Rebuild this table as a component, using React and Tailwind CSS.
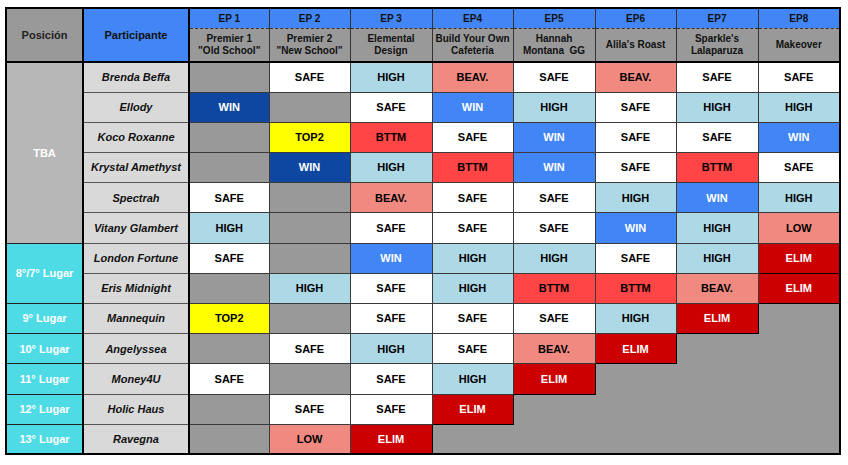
const EPISODES = [
  ['EP 1', ['Premier 1', '"Old School"']],
  ['EP 2', ['Premier 2', '"New School"']],
  ['EP 3', ['Elemental', 'Design']],
  ['EP4', ['Build Your Own', 'Cafeteria']],
  ['EP5', ['Hannah', 'Montana\u00a0 GG']],
  ['EP6', ["Alila's Roast"]],
  ['EP7', ["Sparkle's", 'Lalaparuza']],
  ['EP8', ['Makeover']],
]

// '-' = no participation (gray), 'W' = dark-blue win
const ROWS = [
  { name: 'Brenda Beffa', res: ['-', 'SAFE', 'HIGH', 'BEAV.', 'SAFE', 'BEAV.', 'SAFE', 'SAFE'] },
  { name: 'Ellody', res: ['W', '-', 'SAFE', 'WIN', 'HIGH', 'SAFE', 'HIGH', 'HIGH'] },
  { name: 'Koco Roxanne', res: ['-', 'TOP2', 'BTTM', 'SAFE', 'WIN', 'SAFE', 'SAFE', 'WIN'] },
  { name: 'Krystal Amethyst', res: ['-', 'W', 'HIGH', 'BTTM', 'WIN', 'SAFE', 'BTTM', 'SAFE'] },
  { name: 'Spectrah', res: ['SAFE', '-', 'BEAV.', 'SAFE', 'SAFE', 'HIGH', 'WIN', 'HIGH'] },
  { name: 'Vitany Glambert', res: ['HIGH', '-', 'SAFE', 'SAFE', 'SAFE', 'WIN', 'HIGH', 'LOW'] },
  { name: 'London Fortune', res: ['SAFE', '-', 'WIN', 'HIGH', 'HIGH', 'SAFE', 'HIGH', 'ELIM'] },
  { name: 'Eris Midnight', res: ['-', 'HIGH', 'SAFE', 'HIGH', 'BTTM', 'BTTM', 'BEAV.', 'ELIM'] },
  { name: 'Mannequin', res: ['TOP2', '-', 'SAFE', 'SAFE', 'SAFE', 'HIGH', 'ELIM'] },
  { name: 'Angelyssea', res: ['-', 'SAFE', 'HIGH', 'SAFE', 'BEAV.', 'ELIM'] },
  { name: 'Money4U', res: ['SAFE', '-', 'SAFE', 'HIGH', 'ELIM'] },
  { name: 'Holic Haus', res: ['-', 'SAFE', 'SAFE', 'ELIM'] },
  { name: 'Ravegna', res: ['-', 'LOW', 'ELIM'] },
]

const PLACES = [
  { label: 'TBA', span: 6, cls: 'bg-[#b7b7b7]' },
  { label: '8°/7° Lugar', span: 2, cls: 'bg-[#4fdbe5]' },
  { label: '9° Lugar', span: 1, cls: 'bg-[#4fdbe5]' },
  { label: '10° Lugar', span: 1, cls: 'bg-[#4fdbe5]' },
  { label: '11° Lugar', span: 1, cls: 'bg-[#4fdbe5]' },
  { label: '12° Lugar', span: 1, cls: 'bg-[#4fdbe5]' },
  { label: '13° Lugar', span: 1, cls: 'bg-[#4fdbe5]' },
]

const CELL = {
  '-': 'bg-[#999999]',
  SAFE: 'bg-white text-black',
  HIGH: 'bg-[#add8e6] text-black',
  'BEAV.': 'bg-[#f08a80] text-black',
  LOW: 'bg-[#f08a80] text-black',
  BTTM: 'bg-[#ff4545] text-black',
  TOP2: 'bg-[#ffff00] text-black',
  WIN: 'bg-[#4285f4] text-white',
  W: 'bg-[#0d47a1] text-white',
  ELIM: 'bg-[#cc0000] text-white border-black',
}

function placeFor(i) {
  let start = 0
  for (const p of PLACES) {
    if (start === i) return p
    start += p.span
  }
  return null
}

export default function App() {
  return (
    <div className="bg-white w-[848px] h-[465px] pt-[7px] pl-[5px] font-['Liberation_Sans',Arial,sans-serif]">
      <table className="table-fixed border-collapse border-2 border-black w-[836px] text-center font-bold">
        <colgroup>
          <col className="w-[77px]" />
          <col className="w-[106px]" />
          <col className="w-[80px]" />
          <col className="w-[81px]" />
          <col className="w-[82px]" />
          <col className="w-[81px]" />
          <col className="w-[82px]" />
          <col className="w-[81px]" />
          <col className="w-[82px]" />
          <col className="w-[82px]" />
        </colgroup>
        <thead>
          <tr className="h-[20px]">
            <th rowSpan={2} className="bg-[#999999] text-[#222] text-[11px] border-r-2 border-b-2 border-black">
              Posición
            </th>
            <th rowSpan={2} className="bg-[#4285f4] text-[#111] text-[11px] border-r-2 border-b-2 border-black">
              Participante
            </th>
            {EPISODES.map(([ep]) => (
              <th
                key={ep}
                className="bg-[#4285f4] text-[#111] text-[10px] border border-[#333] [border-style:solid_solid_dashed_solid] border-t-2 border-t-black"
              >
                {ep}
              </th>
            ))}
          </tr>
          <tr className="h-[34px]">
            {EPISODES.map(([ep, title]) => (
              <th
                key={ep}
                className="bg-[#999999] text-[#111] text-[10px] leading-[12px] border border-[#333] [border-style:dashed_solid_solid_solid] border-b-2 border-b-black"
              >
                {title.map((t, i) => (
                  <div key={i}>{t}</div>
                ))}
              </th>
            ))}
          </tr>
        </thead>
        <tbody>
          {ROWS.map((row, i) => {
            const place = placeFor(i)
            const empty = 8 - row.res.length
            return (
              <tr key={row.name} className="h-[30.2px]">
                {place && (
                  <td
                    rowSpan={place.span}
                    className={`${place.cls} text-white text-[11px] border border-[#222] border-r-2 border-r-black`}
                  >
                    {place.label}
                  </td>
                )}
                <td className="bg-[#d9d9d9] text-[#111] italic text-[11px] border border-[#555] border-r-2 border-r-black">
                  {row.name}
                </td>
                {row.res.map((r, j) => (
                  <td key={j} className={`${CELL[r]} text-[11px] border border-[#3a3a3a]`}>
                    {r === '-' ? '' : r === 'W' ? 'WIN' : r}
                  </td>
                ))}
                {empty > 0 && <td colSpan={empty} className="bg-[#999999] border border-[#999999]" />}
              </tr>
            )
          })}
        </tbody>
      </table>
    </div>
  )
}
